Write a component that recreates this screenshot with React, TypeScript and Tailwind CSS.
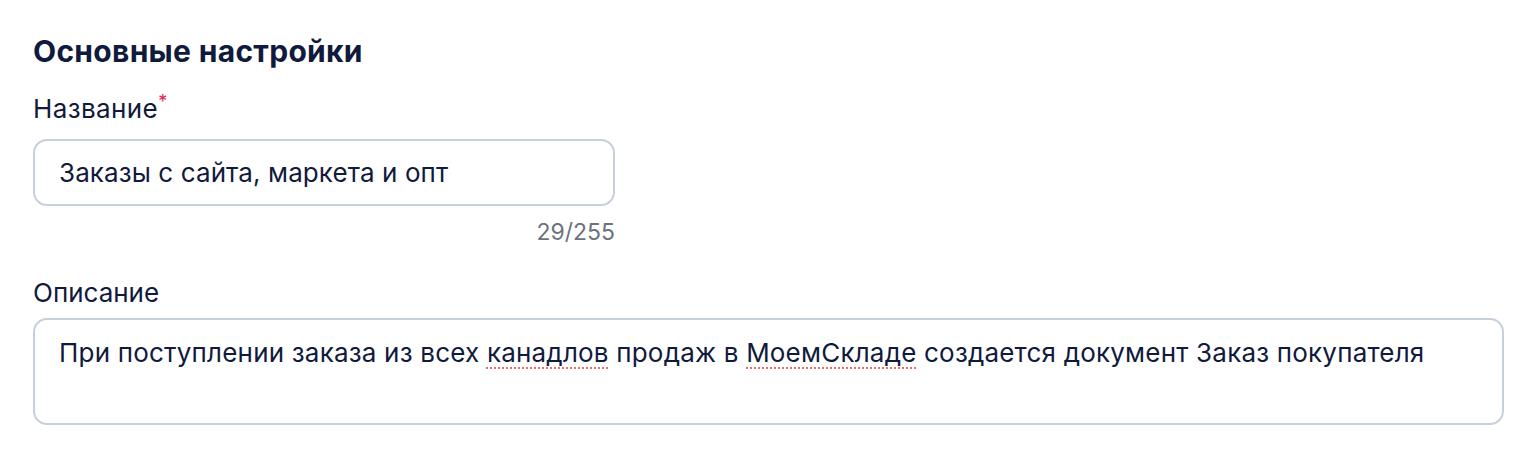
export default function App() {
  return (
    <div className="bg-white w-[1540px] h-[454px] px-[33px] pt-[33px] text-[#101a3c] font-['Inter',sans-serif]">
      <h2 className="text-[30px] leading-[36px] font-bold tracking-[0.3px]">Основные настройки</h2>
      <div className="mt-[24px] w-[582px]">
        <label className="block text-[26px] leading-[32px] tracking-[0.4px]">
          Название<span className="text-[#e0244f] align-top text-[18px] leading-[18px]">*</span>
        </label>
        <div className="mt-[14px] h-[67px] rounded-[14px] border-2 border-[#c8cfdc] flex items-center px-[24px] text-[26px] tracking-[0.1px]">
          Заказы с сайта, маркета и опт
        </div>
        <div className="mt-[12px] text-right text-[23px] leading-[28px] text-[#6b7280]">29/255</div>
      </div>
      <label className="block mt-[31px] text-[26px] leading-[32px]">Описание</label>
      <div className="mt-[9px] w-[1471px] h-[107px] rounded-[14px] border-2 border-[#c8cfdc] px-[24px] pt-[16px] text-[26px] leading-[34px] tracking-[0.2px]">
        При поступлении заказа из всех{" "}
        <span className="underline decoration-dotted decoration-[#f06a6a] decoration-2 underline-offset-[5px]">канадлов</span> продаж в{" "}
        <span className="underline decoration-dotted decoration-[#f06a6a] decoration-2 underline-offset-[5px]">МоемСкладе</span> создается документ Заказ покупателя
      </div>
    </div>
  );
}
